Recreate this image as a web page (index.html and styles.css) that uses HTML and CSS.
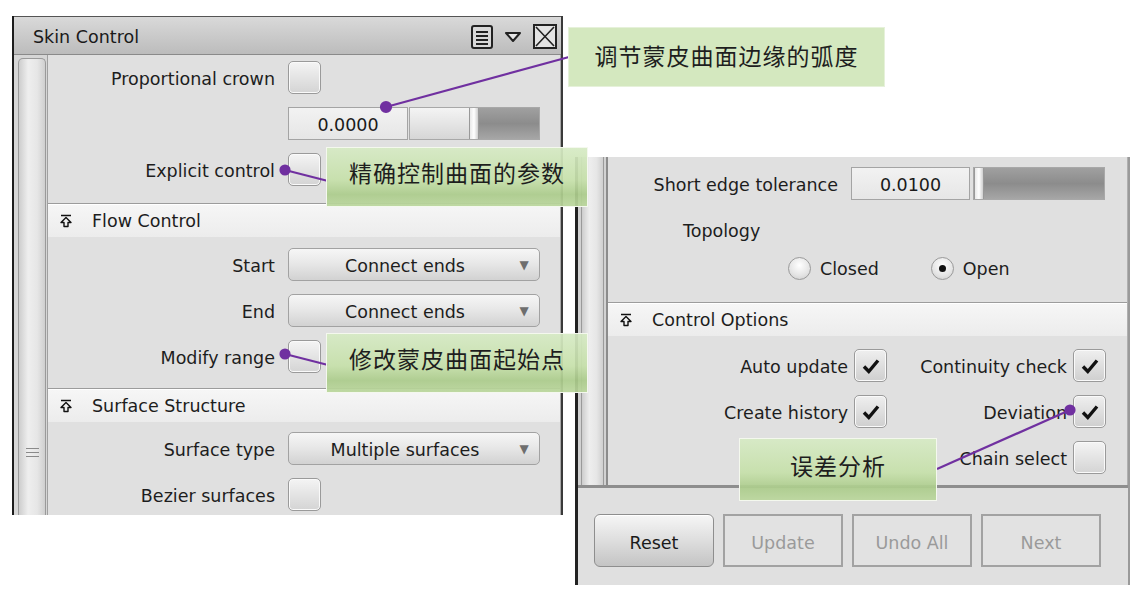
FILE: index.html
```html
<!DOCTYPE html>
<html>
<head>
<meta charset="utf-8">
<title>Skin Control</title>
<link rel="stylesheet" href="styles.css">
</head>
<body>
<div class="canvas">

  <section class="panel left">
    <header class="titlebar">
      <span class="title">Skin Control</span>
      <span class="tb-icons">
        <svg class="ic-menu" width="22" height="24" viewBox="0 0 22 24"><rect x="1" y="1" width="20" height="22" rx="2" fill="#d8d8d8" stroke="#222" stroke-width="2"/><path d="M5 7H17M5 11H17M5 15H17M5 19H17" stroke="#222" stroke-width="1.8"/></svg>
        <svg class="ic-tri" width="18" height="12" viewBox="0 0 18 12"><path d="M2 2H16L9 10Z" fill="#e6e6e6" stroke="#222" stroke-width="2" stroke-linejoin="round"/></svg>
        <svg class="ic-close" width="24" height="25" viewBox="0 0 24 25"><rect x="1" y="1" width="22" height="23" fill="#e4e4e4" stroke="#222" stroke-width="2"/><path d="M3 3L21 22M21 3L3 22" stroke="#222" stroke-width="1.6"/></svg>
      </span>
    </header>
    <div class="pbody">
      <div class="strip"><div class="thumb"><span class="grip"></span></div></div>
      <div class="content">
        <div class="group g1">
          <div class="row"><label>Proportional crown</label><span class="cb"></span></div>
          <div class="row"><span></span>
            <div class="numslider"><span class="field">0.0000</span><span class="slider"><span class="s-light"></span><span class="s-handle"></span><span class="s-dark"></span></span></div>
          </div>
          <div class="row"><label>Explicit control</label><span class="cb"></span></div>
        </div>
        <div class="section">
          <div class="sec-head"><svg class="pin" width="12" height="14" viewBox="0 0 12 14"><path d="M1 1.5H11M6 3.5L1 8.5H4V12.5H8V8.5H11Z" fill="none" stroke="#111" stroke-width="1.4" stroke-linejoin="round"/></svg><span>Flow Control</span></div>
          <div class="group g2">
            <div class="row"><label>Start</label><span class="dd"><span class="dd-text">Connect ends</span><span class="dd-arrow">▼</span></span></div>
            <div class="row"><label>End</label><span class="dd"><span class="dd-text">Connect ends</span><span class="dd-arrow">▼</span></span></div>
            <div class="row"><label>Modify range</label><span class="cb"></span></div>
          </div>
        </div>
        <div class="section">
          <div class="sec-head"><svg class="pin" width="12" height="14" viewBox="0 0 12 14"><path d="M1 1.5H11M6 3.5L1 8.5H4V12.5H8V8.5H11Z" fill="none" stroke="#111" stroke-width="1.4" stroke-linejoin="round"/></svg><span>Surface Structure</span></div>
          <div class="group g3">
            <div class="row"><label>Surface type</label><span class="dd"><span class="dd-text">Multiple surfaces</span><span class="dd-arrow">▼</span></span></div>
            <div class="row"><label>Bezier surfaces</label><span class="cb"></span></div>
          </div>
        </div>
      </div>
    </div>
  </section>

  <section class="panel right">
    <div class="scrollarea">
      <div class="strip r"><div class="thumb"></div></div>
      <div class="content">
        <div class="group gr1">
          <div class="row"><label>Short edge tolerance</label>
            <div class="numslider r"><span class="field">0.0100</span><span class="slider"><span class="s-handle"></span><span class="s-dark"></span></span></div>
          </div>
          <div class="topo">Topology</div>
          <div class="radios">
            <span class="radio"></span><span class="rlabel">Closed</span>
            <span class="radio on"></span><span class="rlabel">Open</span>
          </div>
        </div>
        <div class="section">
          <div class="sec-head"><svg class="pin" width="12" height="14" viewBox="0 0 12 14"><path d="M1 1.5H11M6 3.5L1 8.5H4V12.5H8V8.5H11Z" fill="none" stroke="#111" stroke-width="1.4" stroke-linejoin="round"/></svg><span>Control Options</span></div>
          <div class="cbgrid">
            <label>Auto update</label><span class="cb on"><svg width="22" height="22" viewBox="0 0 22 22"><path d="M4 11.5L8.8 16.5L18 5.5" fill="none" stroke="#111" stroke-width="3.4"/></svg></span>
            <label>Continuity check</label><span class="cb on"><svg width="22" height="22" viewBox="0 0 22 22"><path d="M4 11.5L8.8 16.5L18 5.5" fill="none" stroke="#111" stroke-width="3.4"/></svg></span>
            <label>Create history</label><span class="cb on"><svg width="22" height="22" viewBox="0 0 22 22"><path d="M4 11.5L8.8 16.5L18 5.5" fill="none" stroke="#111" stroke-width="3.4"/></svg></span>
            <label>Deviation</label><span class="cb on"><svg width="22" height="22" viewBox="0 0 22 22"><path d="M4 11.5L8.8 16.5L18 5.5" fill="none" stroke="#111" stroke-width="3.4"/></svg></span>
            <span></span><span></span>
            <label>Chain select</label><span class="cb"></span>
          </div>
        </div>
      </div>
    </div>
    <div class="buttons">
      <button class="btn primary">Reset</button>
      <button class="btn">Update</button>
      <button class="btn">Undo All</button>
      <button class="btn">Next</button>
    </div>
  </section>

  <svg class="leaders" width="1141" height="593" viewBox="0 0 1141 593">
    <g stroke="#7030a0" stroke-width="2.2" fill="#7030a0">
      <line x1="569" y1="57" x2="386" y2="107"/>
      <circle cx="386" cy="107" r="5"/>
      <line x1="328" y1="181" x2="285" y2="170"/>
      <circle cx="285" cy="170" r="4.5"/>
      <line x1="328" y1="365" x2="285" y2="354"/>
      <circle cx="285" cy="354" r="4.5"/>
      <line x1="937" y1="469" x2="1070" y2="410"/>
      <circle cx="1070" cy="410" r="4.5"/>
    </g>
  </svg>

  <div class="callout flat c1">调节蒙皮曲面边缘的弧度</div>
  <div class="callout c2">精确控制曲面的参数</div>
  <div class="callout c3">修改蒙皮曲面起始点</div>
  <div class="callout c4">误差分析</div>
</div>
</body>
</html>
```

FILE: styles.css
```css
* { box-sizing: border-box; margin: 0; padding: 0; }
html, body { background: #ffffff; }
body {
  width: 1141px;
  height: 593px;
  overflow: hidden;
  font-family: "DejaVu Sans", "Noto Sans", sans-serif;
  font-size: 17.5px;
  color: #1d1d1d;
}
.canvas { position: relative; width: 1141px; height: 593px; }

/* ---------- panels ---------- */
.panel { position: absolute; background: #dfdfdf; }
.panel.left {
  left: 12px; top: 16px; width: 551px; height: 499px;
  border-left: 2px solid #1c1c1c;
  border-right: 2px solid #3a3a3a;
  display: flex; flex-direction: column;
}
.titlebar {
  height: 39px;
  flex: none;
  border-top: 1px solid #555;
  border-bottom: 1px solid #8a8a8a;
  background: linear-gradient(#d9d9d9, #bcbcbc);
  display: flex; align-items: center; justify-content: space-between;
  padding: 2px 4px 0 19px;
}
.title { font-size: 17.5px; color: #1a1a1a; }
.tb-icons { display: flex; align-items: center; gap: 11px; }
.ic-tri { margin-top: 1px; }

.pbody { flex: 1; display: flex; min-height: 0; }
.strip {
  width: 34px; flex: none;
  background: #d6d6d6;
  border-right: 1px solid #a0a0a0;
  padding: 3px 1px 0 4px;
  display: flex;
}
.thumb {
  flex: 1;
  border: 1px solid #9a9a9a;
  border-bottom: none;
  border-radius: 5px 5px 0 0;
  background: linear-gradient(90deg, #cdcdcd, #eeeeee 35%, #e6e6e6 70%, #cfcfcf);
  position: relative;
}
.grip {
  position: absolute; left: 7px; top: 389px; width: 13px; height: 9px;
  border-top: 1px solid #8a8a8a; border-bottom: 1px solid #8a8a8a;
}
.grip::after {
  content: ""; position: absolute; left: 0; right: 0; top: 3px; border-top: 1px solid #8a8a8a;
}
.content {
  flex: 1;
  background: #e0e0e0;
  border-right: 1px solid #a8a8a8;
  display: flex; flex-direction: column;
  min-width: 0;
}

/* ---------- rows ---------- */
.group { display: flex; flex-direction: column; gap: 13px; }
.g1 { padding: 6px 0 17px; }
.g2 { padding: 11px 0 15px; }
.g3 { padding: 10px 0 0; }
.row {
  display: grid;
  grid-template-columns: 227px 252px;
  column-gap: 13px;
  align-items: center;
  height: 33px;
}
.row label { text-align: right; white-space: nowrap; padding-top: 2px; }

.section { border-top: 1px solid #9c9c9c; }
.sec-head {
  height: 33px;
  background: linear-gradient(#f6f6f6, #ececec);
  border-top: 1px solid #ffffff;
  display: flex; align-items: center;
  padding-left: 12px;
  gap: 20px;
}

.cb {
  width: 33px; height: 33px;
  border: 1px solid #9a9a9a;
  border-radius: 5px;
  background: linear-gradient(#f4f4f4, #d4d4d4);
  box-shadow: inset 0 0 0 1px #fafafa;
  display: flex; align-items: center; justify-content: center;
}
.cb.on { background: linear-gradient(#efefef, #cfcfcf); }

.numslider { display: flex; height: 33px; }
.field {
  width: 120px;
  border: 1px solid #a4a4a4;
  background: linear-gradient(#f2f2f2, #e6e6e6);
  display: flex; align-items: center; justify-content: center;
  color: #1a1a1a;
  padding-top: 3px;
}
.slider { flex: 1; display: flex; margin-left: 1px; border: 1px solid #a8a8a8; }
.s-light { width: 59px; background: linear-gradient(#f4f4f4, #d6d6d6); }
.s-handle {
  width: 10px;
  background: linear-gradient(90deg, #e8e8e8, #ffffff, #cfcfcf);
  border-left: 1px solid #999; border-right: 1px solid #999;
}
.s-dark { flex: 1; background: linear-gradient(#a0a0a0, #8c8c8c 50%, #a6a6a6 100%); }

.dd {
  height: 33px;
  border: 1px solid #a2a2a2;
  border-radius: 5px;
  background: linear-gradient(#f6f6f6, #e8e8e8 45%, #d2d2d2);
  display: flex; align-items: center;
  padding-right: 8px;
}
.dd-text { flex: 1; text-align: center; padding: 2px 0 0 4px; }
.dd-arrow { font-size: 12px; color: #6e6e6e; width: 14px; text-align: center; }

/* ---------- right panel ---------- */
.panel.right {
  left: 575px; top: 157px; width: 555px; height: 428px;
  border-left: 3px solid #222;
  border-right: 2px solid #9a9a9a;
  display: flex; flex-direction: column;
}
.scrollarea {
  height: 331px; flex: none;
  display: flex;
  border-bottom: 3px solid #8e8e8e;
}
.strip.r {
  width: 30px;
  padding: 0 2px 0 3px;
  border-right: 2px solid #8c8c8c;
  background: #d2d2d2;
}
.strip.r .thumb { border-radius: 0; border-top: none; }
.panel.right .content { border-right: 1px solid #b0b0b0; }
.gr1 { padding: 10px 0 0; gap: 0; }
.gr1 .row { grid-template-columns: 230px 254px; }
.numslider.r .field { width: 119px; }
.numslider.r .slider { margin-left: 3px; }
.topo { margin: 15px 0 0 75px; height: 33px; line-height: 33px; }
.radios {
  display: flex; align-items: center;
  margin: 5px 0 0 180px;
  height: 30px;
}
.radio {
  width: 23px; height: 23px; border-radius: 50%;
  border: 1px solid #9a9a9a;
  background: radial-gradient(circle at 50% 35%, #ffffff, #e4e4e4 60%, #c8c8c8);
  display: flex; align-items: center; justify-content: center;
}
.radio.on::after { content: ""; width: 7px; height: 7px; border-radius: 50%; background: #111; }
.rlabel { margin-left: 9px; padding-top: 2px; }
.radios .rlabel + .radio { margin-left: 52px; }
.panel.right .section { margin-top: 19px; }
.cbgrid {
  display: grid;
  grid-template-columns: 240px 33px 174px 33px;
  column-gap: 6px;
  row-gap: 13px;
  grid-auto-rows: 33px;
  align-items: center;
  padding-top: 13px;
}
.cbgrid label { text-align: right; white-space: nowrap; padding-top: 2px; }

.buttons {
  flex: 1;
  display: flex; gap: 9px;
  padding: 26px 0 0 16px;
  background: #e0e0e0;
}
.btn {
  width: 120px; height: 53px;
  font-family: inherit; font-size: 17.5px;
  background: #e2e2e2;
  border: 2px solid #a2a2a2;
  color: #9a9a9a;
  padding-top: 4px;
}
.btn.primary {
  border: 1px solid #8e8e8e;
  border-radius: 6px;
  background: linear-gradient(#f6f6f6, #dedede 50%, #c4c4c4);
  color: #1a1a1a;
  box-shadow: inset 0 1px 0 #fff;
}

/* ---------- annotations ---------- */
.leaders { position: absolute; left: 0; top: 0; pointer-events: none; }
.callout {
  position: absolute;
  font-family: "Noto Sans CJK SC", "Noto Sans", sans-serif;
  font-size: 23px;
  letter-spacing: 1px;
  color: #1e1e1e;
  display: flex; align-items: center; justify-content: center;
  border: 1px solid #f4f8ee;
  background: linear-gradient(rgba(214,234,196,0.93), rgba(198,224,170,0.93) 55%, rgba(172,204,140,0.93) 80%, rgba(186,214,156,0.93));
  padding-bottom: 10px;
}
.callout.flat { background: #d4e8bf; border-color: #e6f1da; padding-bottom: 4px; }
.c1 { left: 568px; top: 27px; width: 317px; height: 60px; }
.c2 { left: 326px; top: 147px; width: 262px; height: 60px; }
.c3 { left: 326px; top: 333px; width: 262px; height: 60px; }
.c4 { left: 739px; top: 438px; width: 198px; height: 63px; }
```
